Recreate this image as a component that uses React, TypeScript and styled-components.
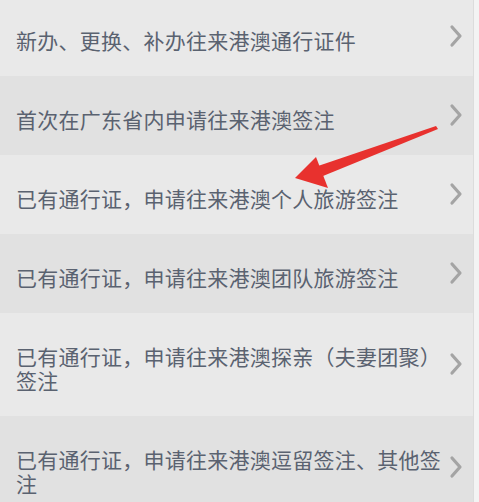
import React, { FC } from 'react';
import styled, { createGlobalStyle } from 'styled-components';

const items: string[] = [
  '新办、更换、补办往来港澳通行证件',
  '首次在广东省内申请往来港澳签注',
  '已有通行证，申请往来港澳个人旅游签注',
  '已有通行证，申请往来港澳团队旅游签注',
  '已有通行证，申请往来港澳探亲（夫妻团聚）签注',
  '已有通行证，申请往来港澳逗留签注、其他签注',
];

const Chevron: FC = () => (
  <svg width="14" height="24" viewBox="0 0 14 24">
    <path d="M3 3 L11 12 L3 21" fill="none" stroke="#a4a4a4" strokeWidth="3.2" strokeLinecap="round" strokeLinejoin="round" />
  </svg>
);

const Arrow: FC = () => (
  <ArrowSvg width="479" height="502" viewBox="0 0 479 502">
    <polygon points="436,126 438,129 323,176 318,166" fill="#e8312e" />
    <polygon points="295,178 316,157 328,188" fill="#e8312e" />
  </ArrowSvg>
);

export default function App() {
  return (
    <>
      <GlobalStyle />
      <Page>
        <List>
          {items.map((text, index) => (
            <Row key={index} $dark={index % 2 === 1}>
              <Label>{text}</Label>
              <ChevronBox>
                <Chevron />
              </ChevronBox>
            </Row>
          ))}
        </List>
        <Arrow />
      </Page>
    </>
  );
}

const GlobalStyle = createGlobalStyle`
  html, body {
    margin: 0;
    padding: 0;
    background: #f3f3f3;
    overflow: hidden;
  }
`;

const Page = styled.div`
  position: relative;
  width: 479px;
  height: 502px;
  overflow: hidden;
  background: #f3f3f3;
  font-family: 'Noto Sans CJK SC', 'Noto Sans', sans-serif;
`;

const List = styled.div`
  width: 473px;
  margin-top: -3px;
  display: flex;
  flex-direction: column;
  border-right: 1px solid #dcdcdc;
`;

const Row = styled.div<{ $dark?: boolean }>`
  display: flex;
  align-items: center;
  padding: 22px 10px 24px 16px;
  background: ${props => (props.$dark ? '#e1e1e1' : '#e9e9e9')};
`;

const Label = styled.div`
  flex: 1;
  padding-top: 9px;
  font-size: 21px;
  line-height: 24px;
  letter-spacing: 0.25px;
  color: #5a6270;
`;

const ChevronBox = styled.div`
  display: flex;
  align-items: center;
  margin-left: 4px;
  width: 14px;
  height: 24px;
`;

const ArrowSvg = styled.svg`
  position: absolute;
  left: 0;
  top: 0;
  pointer-events: none;
`;
